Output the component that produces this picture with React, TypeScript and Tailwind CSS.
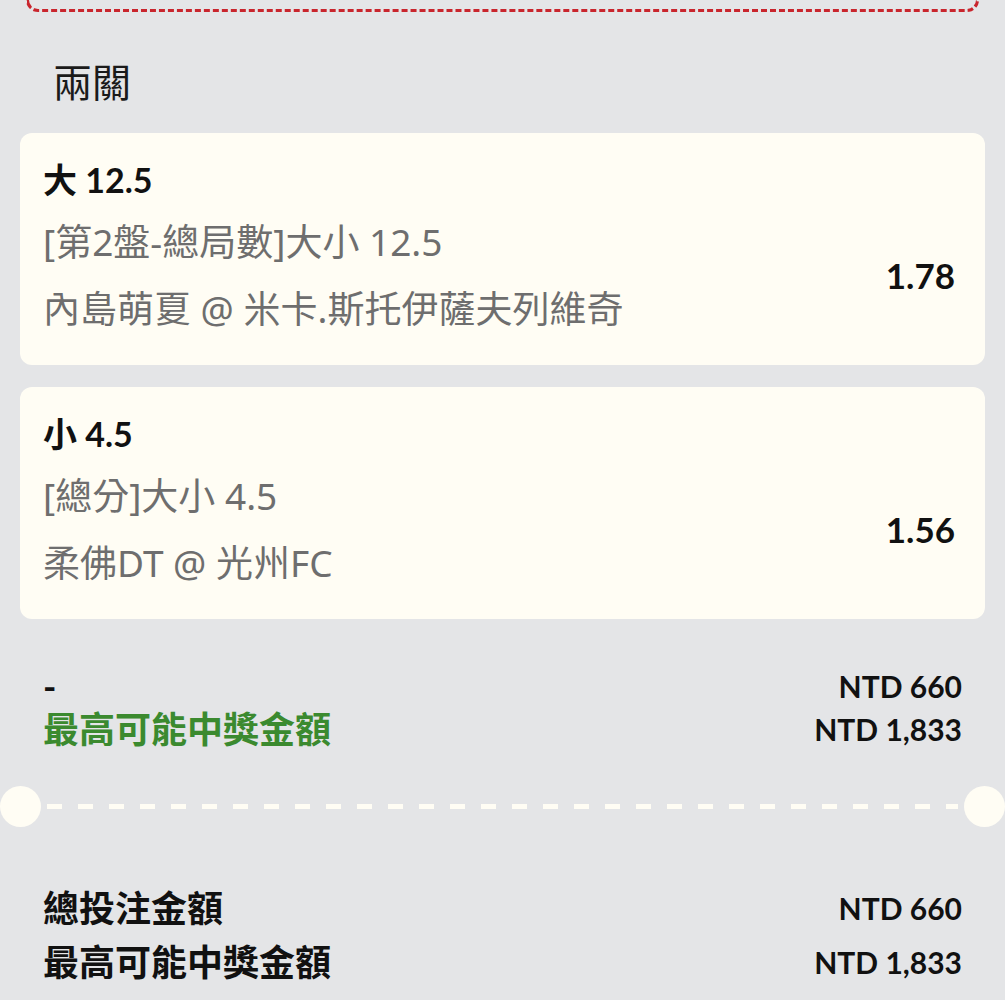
import React from 'react';

const cjk = '"Noto Sans", "Noto Sans CJK TC", sans-serif';
const latin = 'Lato, "Noto Sans CJK TC", sans-serif';

type Leg = { pick: string; market: string; match: string; odds: string };

const legs: Leg[] = [
  { pick: '大 12.5', market: '[第2盤-總局數]大小 12.5', match: '內島萌夏 @ 米卡.斯托伊薩夫列維奇', odds: '1.78' },
  { pick: '小 4.5', market: '[總分]大小 4.5', match: '柔佛DT @ 光州FC', odds: '1.56' },
];

function LegCard({ leg }: { leg: Leg }) {
  return (
    <div className="rounded-[12px] bg-[#fffdf4] pl-[23px] pr-[30px] pt-[27px] pb-[24px]">
      <div className="text-[34px] font-bold leading-[40px] text-[#111]" style={{ fontFamily: latin }}>
        {leg.pick}
      </div>
      <div className="mt-[10px] flex items-center justify-between">
        <div className="text-[37px] leading-[64px] text-[#6e6e6e]" style={{ fontFamily: cjk }}>
          <div>{leg.market}</div>
          <div className="mt-[3px]">{leg.match}</div>
        </div>
        <div className="text-[35px] font-bold text-[#111]" style={{ fontFamily: latin }}>
          {leg.odds}
        </div>
      </div>
    </div>
  );
}

function SummaryRow({ label, value, green }: { label: string; value: string; green?: boolean }) {
  return (
    <div className="flex items-center justify-between">
      <span
        className={green ? 'text-[36px] font-bold text-[#3b8a2f]' : 'text-[36px] font-bold text-[#111]'}
        style={{ fontFamily: latin }}
      >
        {label}
      </span>
      <span className="text-[30px] font-bold text-[#111]" style={{ fontFamily: latin }}>
        {value}
      </span>
    </div>
  );
}

export default function App() {
  return (
    <div className="min-h-[1000px] w-[1005px] overflow-hidden bg-[#e4e5e7] pb-[20px]">
      {/* end of the previous ticket */}
      <div className="mx-[26px] h-[12px] rounded-b-[14px] border-[3px] border-t-0 border-dashed border-[#c9252d]" />

      <h2 className="mt-[48px] px-[53px] text-[39px] font-normal leading-[44px] text-[#1a1a1a]" style={{ fontFamily: cjk }}>
        兩關
      </h2>

      <div className="mx-[20px] mt-[29px] flex flex-col gap-[22px]">
        {legs.map((leg) => (
          <LegCard key={leg.odds} leg={leg} />
        ))}
      </div>

      <div className="mt-[46px] pl-[43px] pr-[43px] leading-[43px]">
        <SummaryRow label="-" value="NTD 660" />
        <SummaryRow label="最高可能中獎金額" value="NTD 1,833" green />
      </div>

      {/* ticket cut line */}
      <div className="mt-[35px] flex h-[40px] items-center">
        <div className="size-[41px] shrink-0 rounded-full bg-[#fffdf4]" />
        <div className="ml-[6px] mr-[6px] h-[5px] flex-1 bg-[repeating-linear-gradient(90deg,#fffdf4_0_15px,transparent_15px_31px)]" />
        <div className="size-[41px] shrink-0 rounded-full bg-[#fffdf4]" />
      </div>

      <div className="mt-[55px] pl-[43px] pr-[43px] leading-[54px]">
        <SummaryRow label="總投注金額" value="NTD 660" />
        <SummaryRow label="最高可能中獎金額" value="NTD 1,833" />
      </div>
    </div>
  );
}
